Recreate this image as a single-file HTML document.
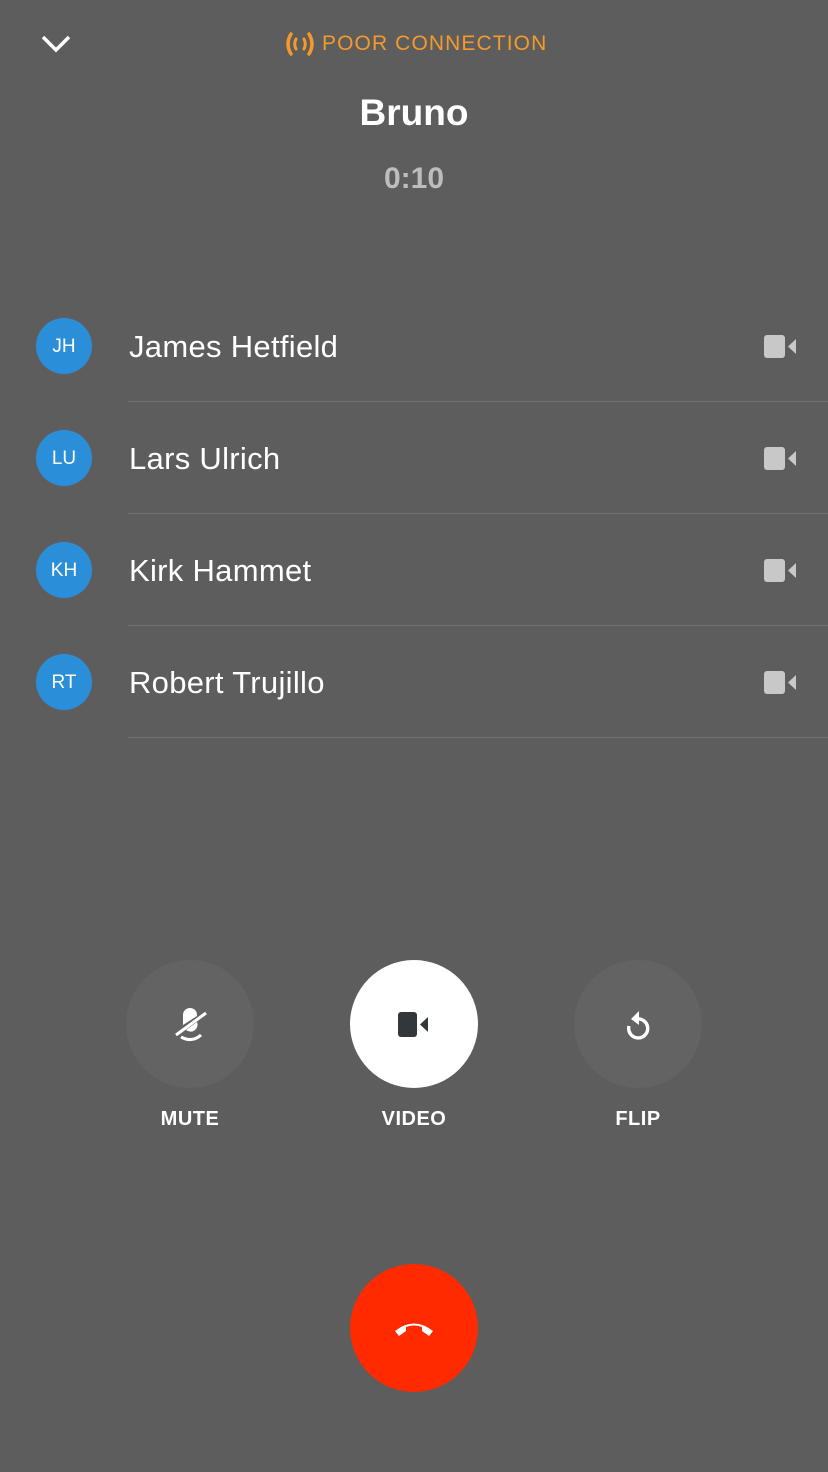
<!DOCTYPE html>
<html><head><style>
body{margin:0;width:828px;height:1472px;background:#5d5d5d;font-family:"Liberation Sans",sans-serif;position:relative;overflow:hidden}
.a{position:absolute}
.row{position:absolute;left:0;width:828px;height:112px}
.av{position:absolute;left:36px;top:28px;width:56px;height:56px;border-radius:50%;background:#2a8fd8;color:#fff;font-size:19px;line-height:58px;text-align:center}
.nm{position:absolute;left:129px;top:37px;color:#fff;font-size:31px;line-height:40px;letter-spacing:0.3px}
.sep{position:absolute;left:128px;right:0;bottom:0;height:1px;background:#727272}
.cam{position:absolute;left:764px;top:45px}
.btn{position:absolute;width:128px;height:128px;border-radius:50%;top:960px}
.lb{position:absolute;top:1108px;width:200px;text-align:center;color:#fff;font-weight:bold;font-size:20px;letter-spacing:0.5px}
</style></head><body>
<svg class="a" style="left:40px;top:34px" width="32" height="20" viewBox="0 0 32 20"><path d="M3 3 L16 16 L29 3" stroke="#fff" stroke-width="3.5" fill="none"/></svg>
<svg class="a" style="left:283px;top:31px" width="34" height="26" viewBox="0 0 34 26"><path d="M8 3 Q2 13 8 23 M26 3 Q32 13 26 23" stroke="#f59a2a" stroke-width="3.5" fill="none" stroke-linecap="round"/><path d="M13 8 Q10.5 13 13 18 M21 8 Q23.5 13 21 18" stroke="#f59a2a" stroke-width="3" fill="none" stroke-linecap="round"/></svg>
<div class="a" style="left:322px;top:31px;color:#f59a2a;font-size:21px;line-height:26px;letter-spacing:1.1px">POOR CONNECTION</div>
<div class="a" style="left:0;width:828px;top:90px;text-align:center;color:#fff;font-weight:bold;font-size:37px;line-height:46px">Bruno</div>
<div class="a" style="left:0;width:828px;top:160px;text-align:center;color:#bdbdbd;font-weight:bold;font-size:30px;line-height:38px">0:10</div>

<div class="row" style="top:290px"><div class="av">JH</div><div class="nm">James Hetfield</div><svg class="cam" width="33" height="23" viewBox="0 0 33 23"><rect x="0" y="0" width="21" height="23" rx="3" fill="#c8c8c8"/><path d="M24 11.5 L32 4 V19 Z" fill="#c8c8c8"/></svg><div class="sep"></div></div>
<div class="row" style="top:402px"><div class="av">LU</div><div class="nm">Lars Ulrich</div><svg class="cam" width="33" height="23" viewBox="0 0 33 23"><rect x="0" y="0" width="21" height="23" rx="3" fill="#c8c8c8"/><path d="M24 11.5 L32 4 V19 Z" fill="#c8c8c8"/></svg><div class="sep"></div></div>
<div class="row" style="top:514px"><div class="av">KH</div><div class="nm">Kirk Hammet</div><svg class="cam" width="33" height="23" viewBox="0 0 33 23"><rect x="0" y="0" width="21" height="23" rx="3" fill="#c8c8c8"/><path d="M24 11.5 L32 4 V19 Z" fill="#c8c8c8"/></svg><div class="sep"></div></div>
<div class="row" style="top:626px"><div class="av">RT</div><div class="nm">Robert Trujillo</div><svg class="cam" width="33" height="23" viewBox="0 0 33 23"><rect x="0" y="0" width="21" height="23" rx="3" fill="#c8c8c8"/><path d="M24 11.5 L32 4 V19 Z" fill="#c8c8c8"/></svg><div class="sep"></div></div>

<div class="btn" style="left:126px;background:#636363"></div>
<svg class="a" style="left:172px;top:1006px" width="36" height="36" viewBox="0 0 36 36"><path d="M11 19 V9 A7 7 0 0 1 25 9 V10 Z" fill="#fff"/><path d="M4 29 L34 7" stroke="#fff" stroke-width="3"/><path d="M14 24 L25 16 A7 7 0 0 1 14 24Z" fill="#fff"/><path d="M9 31 Q20 37 29 29" stroke="#fff" stroke-width="3" fill="none"/></svg>
<div class="btn" style="left:350px;background:#fff"></div>
<svg class="a" style="left:398px;top:1012px" width="32" height="26" viewBox="0 0 32 26"><rect x="0" y="0" width="19" height="25" rx="3" fill="#33373b"/><path d="M22 12.5 L30 5 V20 Z" fill="#33373b"/></svg>
<div class="btn" style="left:574px;background:#636363"></div>
<svg class="a" style="left:620px;top:1006px" width="36" height="36" viewBox="0 0 36 36"><path d="M9 20 A9.5 9.5 0 1 0 17 13" stroke="#fff" stroke-width="3.4" fill="none"/><path d="M19 5 L11 13 L19 19 Z" fill="#fff"/></svg>
<div class="lb" style="left:90px">MUTE</div>
<div class="lb" style="left:314px">VIDEO</div>
<div class="lb" style="left:538px">FLIP</div>

<div class="a" style="left:350px;top:1264px;width:128px;height:128px;border-radius:50%;background:#ff2a00"></div>
<svg class="a" style="left:392px;top:1316px" width="44" height="24" viewBox="0 0 44 24"><path d="M3 15 Q22 0 41 15 L37 20 L30 15 V11 Q22 8 14 11 V15 L7 20 Z" fill="#fff"/></svg>
</body></html>
